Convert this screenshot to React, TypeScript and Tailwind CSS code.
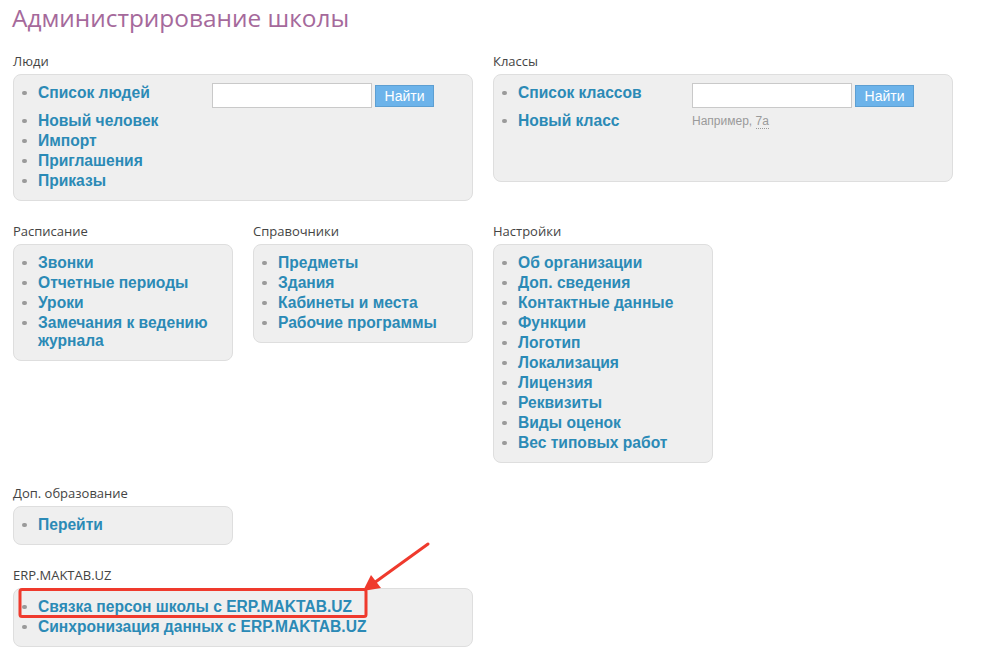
import React from "react";

const linkCls =
	"text-[15.6px] leading-[18px] font-bold text-[#2b8ab6] hover:underline cursor-pointer";

const Item = ({ text }: { text: string }) => (
	<li className="flex items-start">
		<span className="mt-[7px] mr-[11px] h-[4px] w-[5px] shrink-0 rounded-full bg-[#9a9a9a]" />
		<a className={linkCls}>{text}</a>
	</li>
);

const SearchForm = () => (
	<form className="flex items-start gap-[3px]" onSubmit={(e) => e.preventDefault()}>
		<input
			type="text"
			className="h-[25px] w-[160px] border border-[#c9c9c9] bg-white px-1 text-[13px] outline-none"
		/>
		<button
			type="submit"
			className="mt-[2px] h-[22px] w-[59px] border border-[#5d9fd2] bg-[#6cb3ea] text-[14px] leading-[20px] text-white"
		>
			Найти
		</button>
	</form>
);

const Section = ({
	title,
	className = "",
	boxClass = "",
	children,
}: {
	title: string;
	className?: string;
	boxClass?: string;
	children: React.ReactNode;
}) => (
	<section className={className}>
		<h2
			className="mb-[5px] h-4 text-[13px] leading-4 text-[#444]"
			style={{ fontFamily: "'Open Sans', sans-serif" }}
		>
			{title}
		</h2>
		<div
			className={`rounded-[8px] border border-[#dedede] bg-[#efefef] pt-[9px] pb-[10px] pl-[8px] ${boxClass}`}
		>
			{children}
		</div>
	</section>
);

const List = ({ items }: { items: string[] }) => (
	<ul className="flex flex-col gap-[2px]">
		{items.map((t) => (
			<Item key={t} text={t} />
		))}
	</ul>
);

export default function App() {
	return (
		<div
			className="relative h-[658px] w-[1002px] overflow-hidden bg-white pl-[13px]"
			style={{ fontFamily: "'Liberation Sans', Arial, sans-serif" }}
		>
			<h1
				className="-ml-[1px] mb-[17px] h-9 text-[24.4px] leading-9 text-[#a5699b]"
				style={{ fontFamily: "'Open Sans', sans-serif" }}
			>
				Администрирование школы
			</h1>

			<div className="grid grid-cols-[220px_220px_220px_220px] items-start gap-x-5 gap-y-[22px]">
				<Section title="Люди" className="col-span-2">
					<ul className="flex flex-col gap-[2px]">
						<li className="flex h-[26px] items-start">
							<div className="flex w-[190px] items-start">
								<span className="mt-[7px] mr-[11px] h-[4px] w-[5px] shrink-0 rounded-full bg-[#9a9a9a]" />
								<a className={linkCls}>Список людей</a>
							</div>
							<div className="-mt-[1px]">
								<SearchForm />
							</div>
						</li>
						<Item text="Новый человек" />
						<Item text="Импорт" />
						<Item text="Приглашения" />
						<Item text="Приказы" />
					</ul>
				</Section>

				<Section title="Классы" className="col-span-2" boxClass="h-[108px]">
					<ul className="flex flex-col gap-[2px]">
						<li className="flex h-[26px] items-start">
							<div className="flex w-[190px] items-start">
								<span className="mt-[7px] mr-[11px] h-[4px] w-[5px] shrink-0 rounded-full bg-[#9a9a9a]" />
								<a className={linkCls}>Список классов</a>
							</div>
							<div className="-mt-[1px]">
								<SearchForm />
							</div>
						</li>
						<li className="flex items-start">
							<div className="flex w-[190px] items-start">
								<span className="mt-[7px] mr-[11px] h-[4px] w-[5px] shrink-0 rounded-full bg-[#9a9a9a]" />
								<a className={linkCls}>Новый класс</a>
							</div>
							<span className="text-[12px] leading-[18px] text-[#9a9a9a]">
								Например,{" "}
								<span className="border-b border-dotted border-[#9a9a9a]">7а</span>
							</span>
						</li>
					</ul>
				</Section>

				<Section title="Расписание">
					<List items={["Звонки", "Отчетные периоды", "Уроки", "Замечания к ведению журнала"]} />
				</Section>

				<Section title="Справочники">
					<List items={["Предметы", "Здания", "Кабинеты и места", "Рабочие программы"]} />
				</Section>

				<Section title="Настройки">
					<List
						items={[
							"Об организации",
							"Доп. сведения",
							"Контактные данные",
							"Функции",
							"Логотип",
							"Локализация",
							"Лицензия",
							"Реквизиты",
							"Виды оценок",
							"Вес типовых работ",
						]}
					/>
				</Section>

				<div />

				<Section title="Доп. образование" className="col-start-1">
					<List items={["Перейти"]} />
				</Section>

				<Section title="ERP.MAKTAB.UZ" className="col-span-2 col-start-1">
					<List items={["Связка персон школы с ERP.MAKTAB.UZ", "Синхронизация данных с ERP.MAKTAB.UZ"]} />
				</Section>
			</div>

			{/* annotation overlay */}
			<svg className="pointer-events-none absolute left-0 top-0" width="1002" height="658">
				<rect x="20" y="589.5" width="346" height="27" rx="2" fill="none" stroke="#ef3a2d" strokeWidth="3" />
				<line x1="428" y1="544" x2="374" y2="583" stroke="#ef3a2d" strokeWidth="3" strokeLinecap="round" />
				<polygon points="363,591 371,575 381,588" fill="#ef3a2d" />
			</svg>
		</div>
	);
}
